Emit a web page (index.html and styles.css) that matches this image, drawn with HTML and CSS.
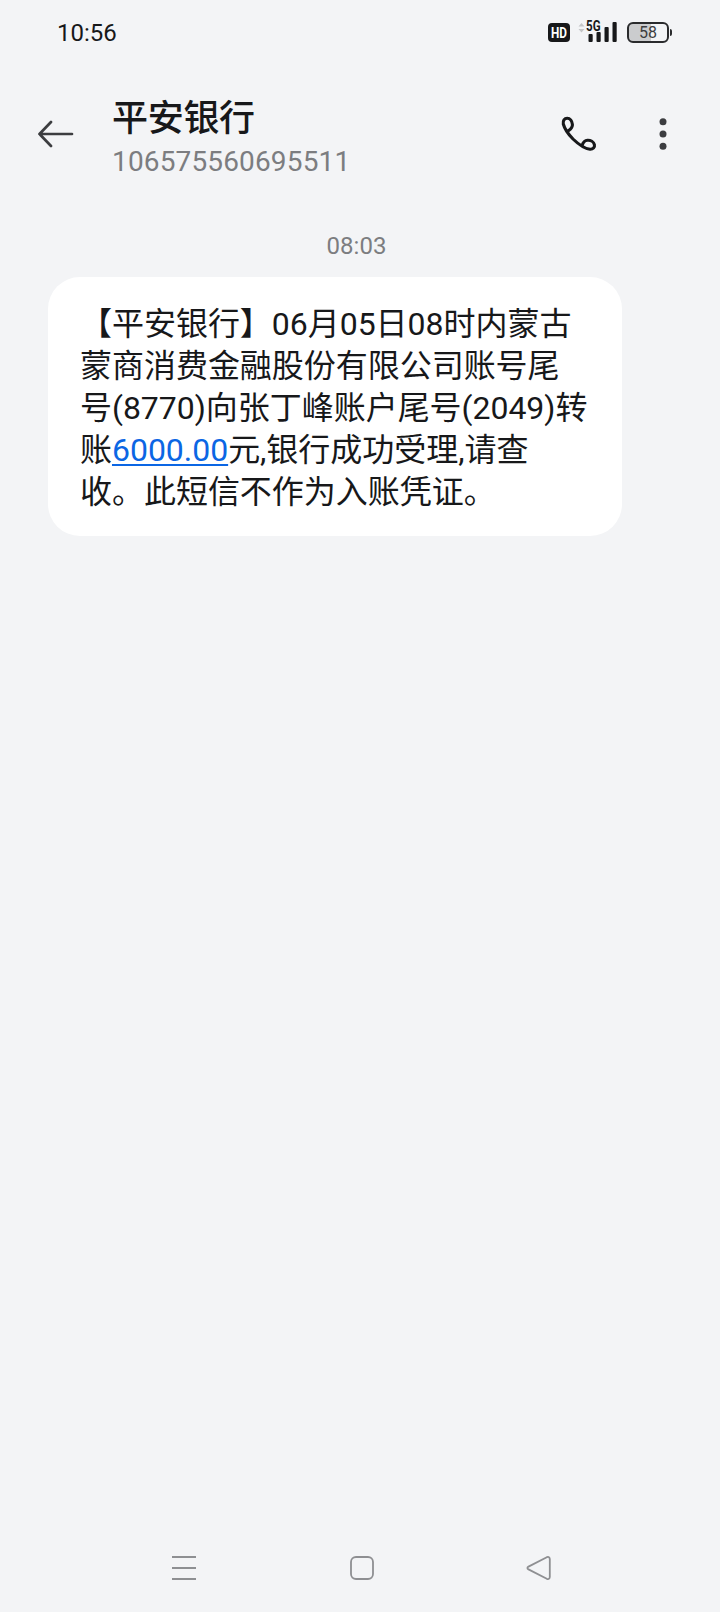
FILE: index.html
```html
<!DOCTYPE html>
<html lang="zh-CN">
<head>
    <meta charset="UTF-8">
    <meta name="viewport" content="width=device-width, initial-scale=1.0">
    <title>平安银行</title>
    <link rel="stylesheet" href="styles.css">
</head>
<body>
    <div class="screen">
        <div class="status-bar">
            <span class="clock">10:56</span>
            <div class="status-icons">
                <svg class="hd" width="22" height="20" viewBox="0 0 22 20">
                    <rect width="22" height="19" rx="4" fill="#17181a"/>
                    <text x="3" y="15" textLength="16" lengthAdjust="spacingAndGlyphs">HD</text>
                </svg>
                <svg class="signal" width="42" height="26" viewBox="0 0 42 26">
                    <path d="M0.5 8.5L3.5 5L6.5 8.5ZM0.5 11L3.5 14.5L6.5 11Z" fill="#c4c5c7"/>
                    <text x="8" y="12.6" textLength="14.5" lengthAdjust="spacingAndGlyphs">5G</text>
                    <g fill="#17181a">
                        <rect x="10.5" y="16" width="4.2" height="8" rx="1"/>
                        <rect x="18.5" y="14" width="4.2" height="10" rx="1"/>
                        <rect x="26.5" y="9" width="4.2" height="15" rx="1"/>
                        <rect x="34.5" y="4" width="4.2" height="20" rx="1"/>
                    </g>
                </svg>
                <div class="battery"><span>58</span></div>
            </div>
        </div>

        <header class="header">
            <svg class="back" width="36" height="28" viewBox="0 0 36 28" fill="none" stroke="#3c3d40" stroke-width="2.7" stroke-linecap="round" stroke-linejoin="round">
                <path d="M13 2L1.5 14L13 26M1.5 14H34"/>
            </svg>
            <div class="contact">
                <h1>平安银行</h1>
                <p>106575560695511</p>
            </div>
            <svg class="call" width="36" height="36" viewBox="0 0 36 36" fill="none" stroke="#17181a" stroke-width="3.1" stroke-linecap="round" stroke-linejoin="round">
                <path d="M7.4 14.8C10.2 12.8 11.7 11 11.4 8.4C11 5 9 2.2 6.2 2.2C3.4 2.2 1.7 4.7 2.3 8C3.5 12.5 7.5 18.4 12 23C17.5 28.3 24 32.7 29 33.3C32 33.5 34 31.3 33.4 28.7C32.7 25.8 29.5 24 26.5 24.2C23.8 24.4 22.2 26 21.2 29.2"/>
            </svg>
            <svg class="more" width="8" height="32" viewBox="0 0 8 32" fill="#3c3d40">
                <circle cx="4" cy="3.7" r="3.5"/>
                <circle cx="4" cy="16" r="3.5"/>
                <circle cx="4" cy="28.3" r="3.5"/>
            </svg>
        </header>

        <main class="messages">
            <div class="time">08:03</div>
            <div class="bubble">
                【平安银行】06月05日08时内蒙古<br>蒙商消费金融股份有限公司账号尾<br>号(8770)向张丁峰账户尾号(2049)转<br>账<a href="#">6000.00</a>元,银行成功受理,请查<br>收。此短信不作为入账凭证。
            </div>
        </main>

        <nav class="nav-bar">
            <svg width="26" height="26" viewBox="0 0 26 26" fill="none" stroke="#8e8f92" stroke-width="1.9">
                <path d="M1 2H25M1 13H25M1 24H25"/>
            </svg>
            <svg width="26" height="26" viewBox="0 0 26 26" fill="none" stroke="#8e8f92" stroke-width="1.8">
                <rect x="2" y="2" width="22" height="22" rx="5"/>
            </svg>
            <svg width="26" height="26" viewBox="0 0 26 26" fill="none" stroke="#8e8f92" stroke-width="1.8" stroke-linejoin="round">
                <path d="M2.5 11.6L20.8 2.2Q23.6 1.2 23.8 4V22Q23.6 24.8 20.8 23.8L2.5 14.4Q0.3 13 2.5 11.6Z"/>
            </svg>
        </nav>
    </div>
</body>
</html>
```

FILE: styles.css
```css
* {
    box-sizing: border-box;
}

body {
    margin: 0;
    background-color: #f3f4f6;
    color: #17181a;
    font-family: Roboto, "Noto Sans CJK SC", sans-serif;
}

.screen {
    display: flex;
    flex-direction: column;
    width: 720px;
    height: 1612px;
}

/* Status bar */
.status-bar {
    display: flex;
    justify-content: space-between;
    align-items: center;
    height: 64px;
    padding: 1px 47px 0 57px;
}

.clock {
    font-size: 24px;
    line-height: 28px;
}

.status-icons {
    display: flex;
    align-items: center;
}

.hd {
    margin-right: 8px;
}

.hd text {
    font-size: 15px;
    font-weight: bold;
    fill: #fff;
}

.signal {
    margin: -3px 7px 0 0;
}

.signal text {
    font-size: 14px;
    font-weight: bold;
    fill: #17181a;
}

.battery {
    position: relative;
    width: 42px;
    height: 21px;
    margin-right: 4px;
    border: 2px solid #2a2b2d;
    border-radius: 6px;
    background: linear-gradient(to right, #cbccce 58%, transparent 58%);
    color: #3c3d40;
    font-size: 16px;
    line-height: 18px;
    text-align: center;
}

.battery::after {
    content: "";
    position: absolute;
    right: -5px;
    top: 5px;
    width: 2px;
    height: 7px;
    border-radius: 0 2px 2px 0;
    background-color: #2a2b2d;
}

/* Header */
.header {
    display: flex;
    align-items: center;
    height: 140px;
    padding: 0 53px 0 38px;
}

.contact {
    flex: 1;
    margin-left: 38px;
    padding-top: 8px;
}

.contact h1 {
    margin: 0;
    font-size: 36px;
    font-weight: 500;
    line-height: 48px;
    letter-spacing: -0.3px;
}

.contact p {
    margin: 0;
    color: #7c7d80;
    font-size: 28px;
    line-height: 38px;
    letter-spacing: 0.15px;
}

.more {
    margin-left: 62px;
}

/* Messages */
.messages {
    flex: 1;
}

.time {
    margin: 28px 7px 0 0;
    color: #7c7d80;
    font-size: 24px;
    line-height: 28px;
    text-align: center;
}

.bubble {
    width: 574px;
    height: 259px;
    margin: 17px 0 0 48px;
    padding: 26px 0 0 32px;
    border-radius: 32px;
    background-color: #fff;
    font-size: 32px;
    line-height: 42px;
    letter-spacing: -0.03px;
    white-space: nowrap;
}

.bubble a {
    color: #0b66e4;
    text-decoration-thickness: 2px;
    text-underline-offset: 3px;
}

/* System navigation */
.nav-bar {
    display: flex;
    justify-content: space-between;
    align-items: center;
    height: 88px;
    padding: 0 168px 0 171px;
}
```
